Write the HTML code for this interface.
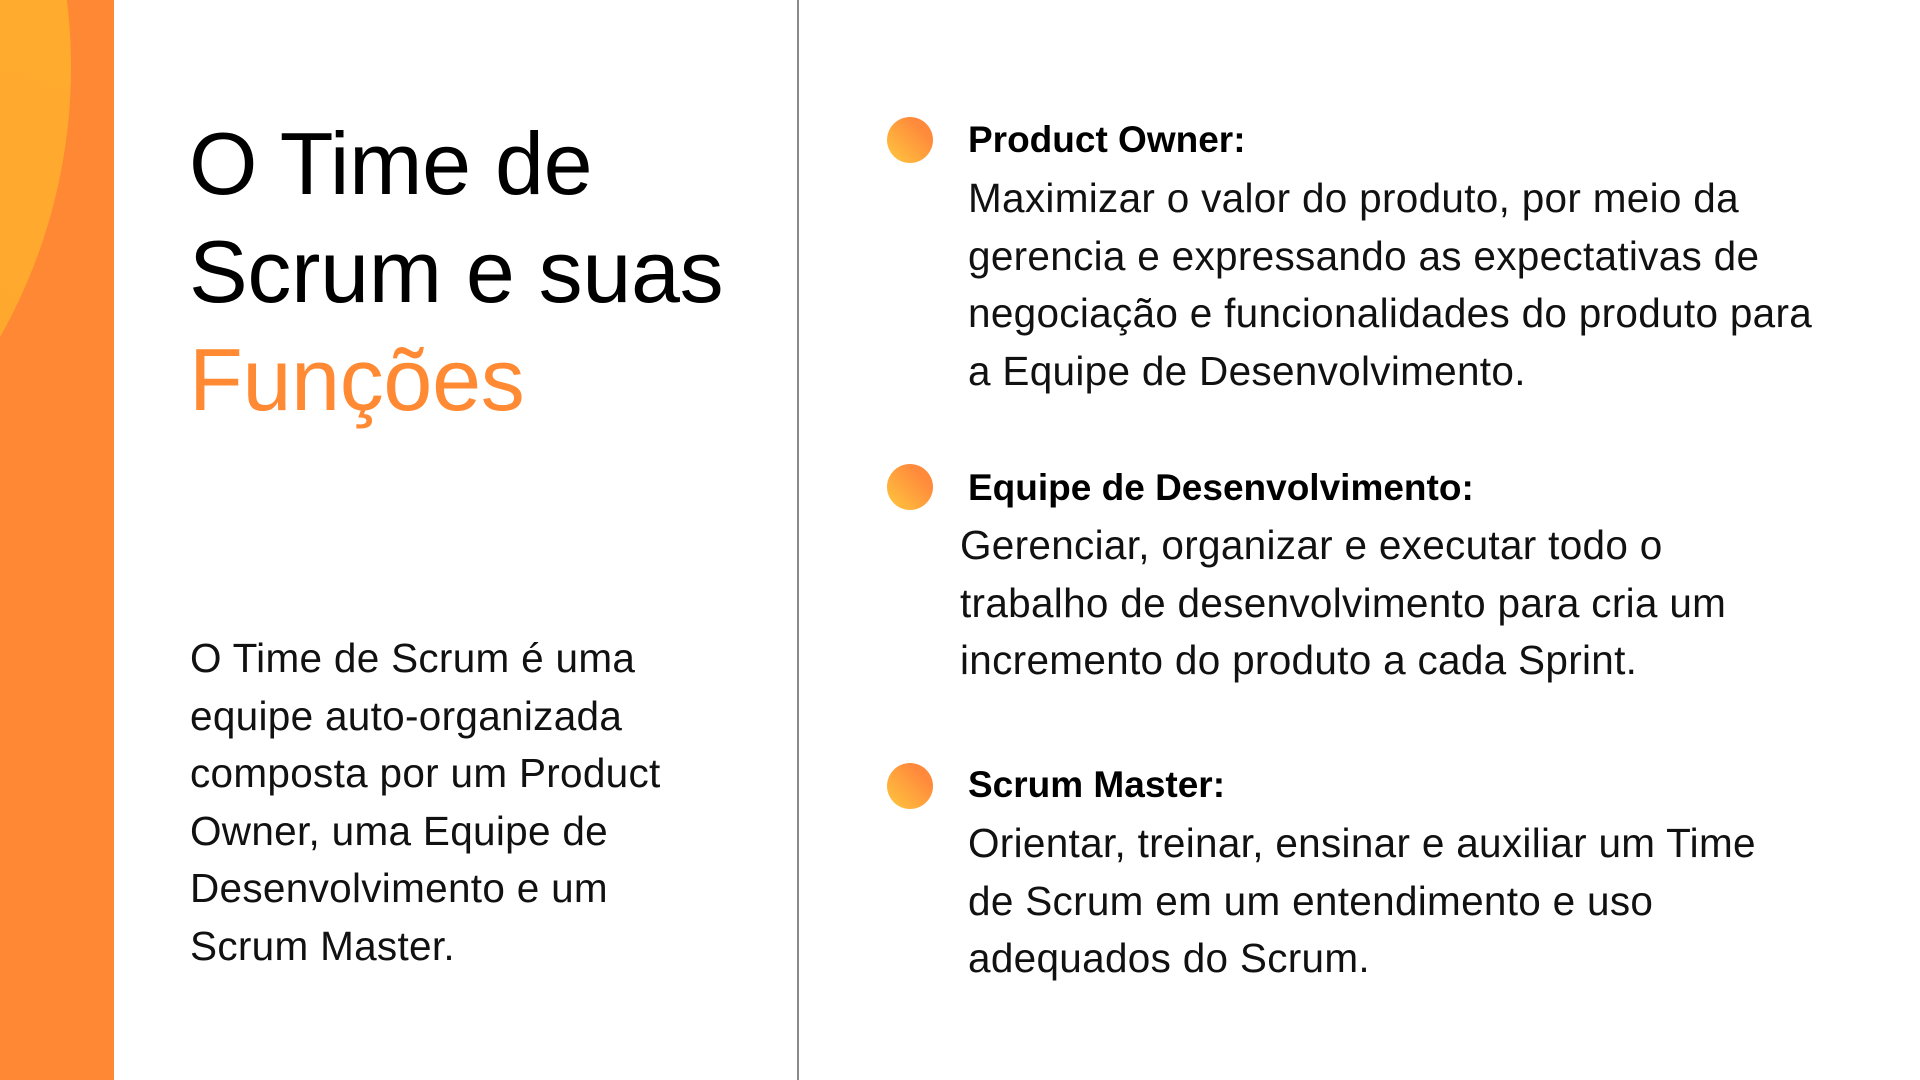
<!DOCTYPE html>
<html><head><meta charset="utf-8"><style>
html,body{margin:0;padding:0}
body{width:1920px;height:1080px;position:relative;overflow:hidden;background:#fff;font-family:"Liberation Sans",sans-serif;color:#111}
.bar{position:absolute;left:0;top:0;width:114px;height:1080px;background:#FF8834;overflow:hidden}
.big{position:absolute;left:-1027px;top:-482px;width:1098px;height:1098px;border-radius:50%;background:linear-gradient(200deg,#FFB02C,#FFA230)}
.div{position:absolute;left:797px;top:0;width:2px;height:1080px;background:#8a8a8a}
.t{position:absolute;left:189px;top:110px;font-size:88px;line-height:108px;letter-spacing:-0.3px;color:#000;white-space:nowrap}
.t span{color:#FF8A33}
.p{position:absolute;left:190px;top:630px;font-size:40.5px;line-height:57.6px;white-space:nowrap;letter-spacing:0.3px}
.h{position:absolute;left:968px;font-size:37px;line-height:57.6px;font-weight:bold;white-space:nowrap;color:#000}
.b{position:absolute;left:968px;font-size:40.5px;line-height:57.6px;white-space:nowrap;letter-spacing:0.3px}
.dot{position:absolute;left:887px;width:46px;height:46px;border-radius:50%;background:linear-gradient(225deg,#FF8A3C 25%,#FFC83E 100%)}
</style></head><body>
<div class="bar"><div class="big"></div></div>
<div class="div"></div>
<div class="t">O Time de<br>Scrum e suas<br><span>Funções</span></div>
<div class="p">O Time de Scrum é uma<br>equipe auto-organizada<br>composta por um Product<br>Owner, uma Equipe de<br>Desenvolvimento e um<br>Scrum Master.</div>

<div class="dot" style="top:117px"></div>
<div class="h" style="top:111px">Product Owner:</div>
<div class="b" style="top:170px">Maximizar o valor do produto, por meio da<br>gerencia e expressando as expectativas de<br>negociação e funcionalidades do produto para<br>a Equipe de Desenvolvimento.</div>

<div class="dot" style="top:464px"></div>
<div class="h" style="top:459px">Equipe de Desenvolvimento:</div>
<div class="b" style="top:517px;left:960px">Gerenciar, organizar e executar todo o<br>trabalho de desenvolvimento para cria um<br>incremento do produto a cada Sprint.</div>

<div class="dot" style="top:763px"></div>
<div class="h" style="top:756px">Scrum Master:</div>
<div class="b" style="top:815px">Orientar, treinar, ensinar e auxiliar um Time<br>de Scrum em um entendimento e uso<br>adequados do Scrum.</div>
</body></html>
